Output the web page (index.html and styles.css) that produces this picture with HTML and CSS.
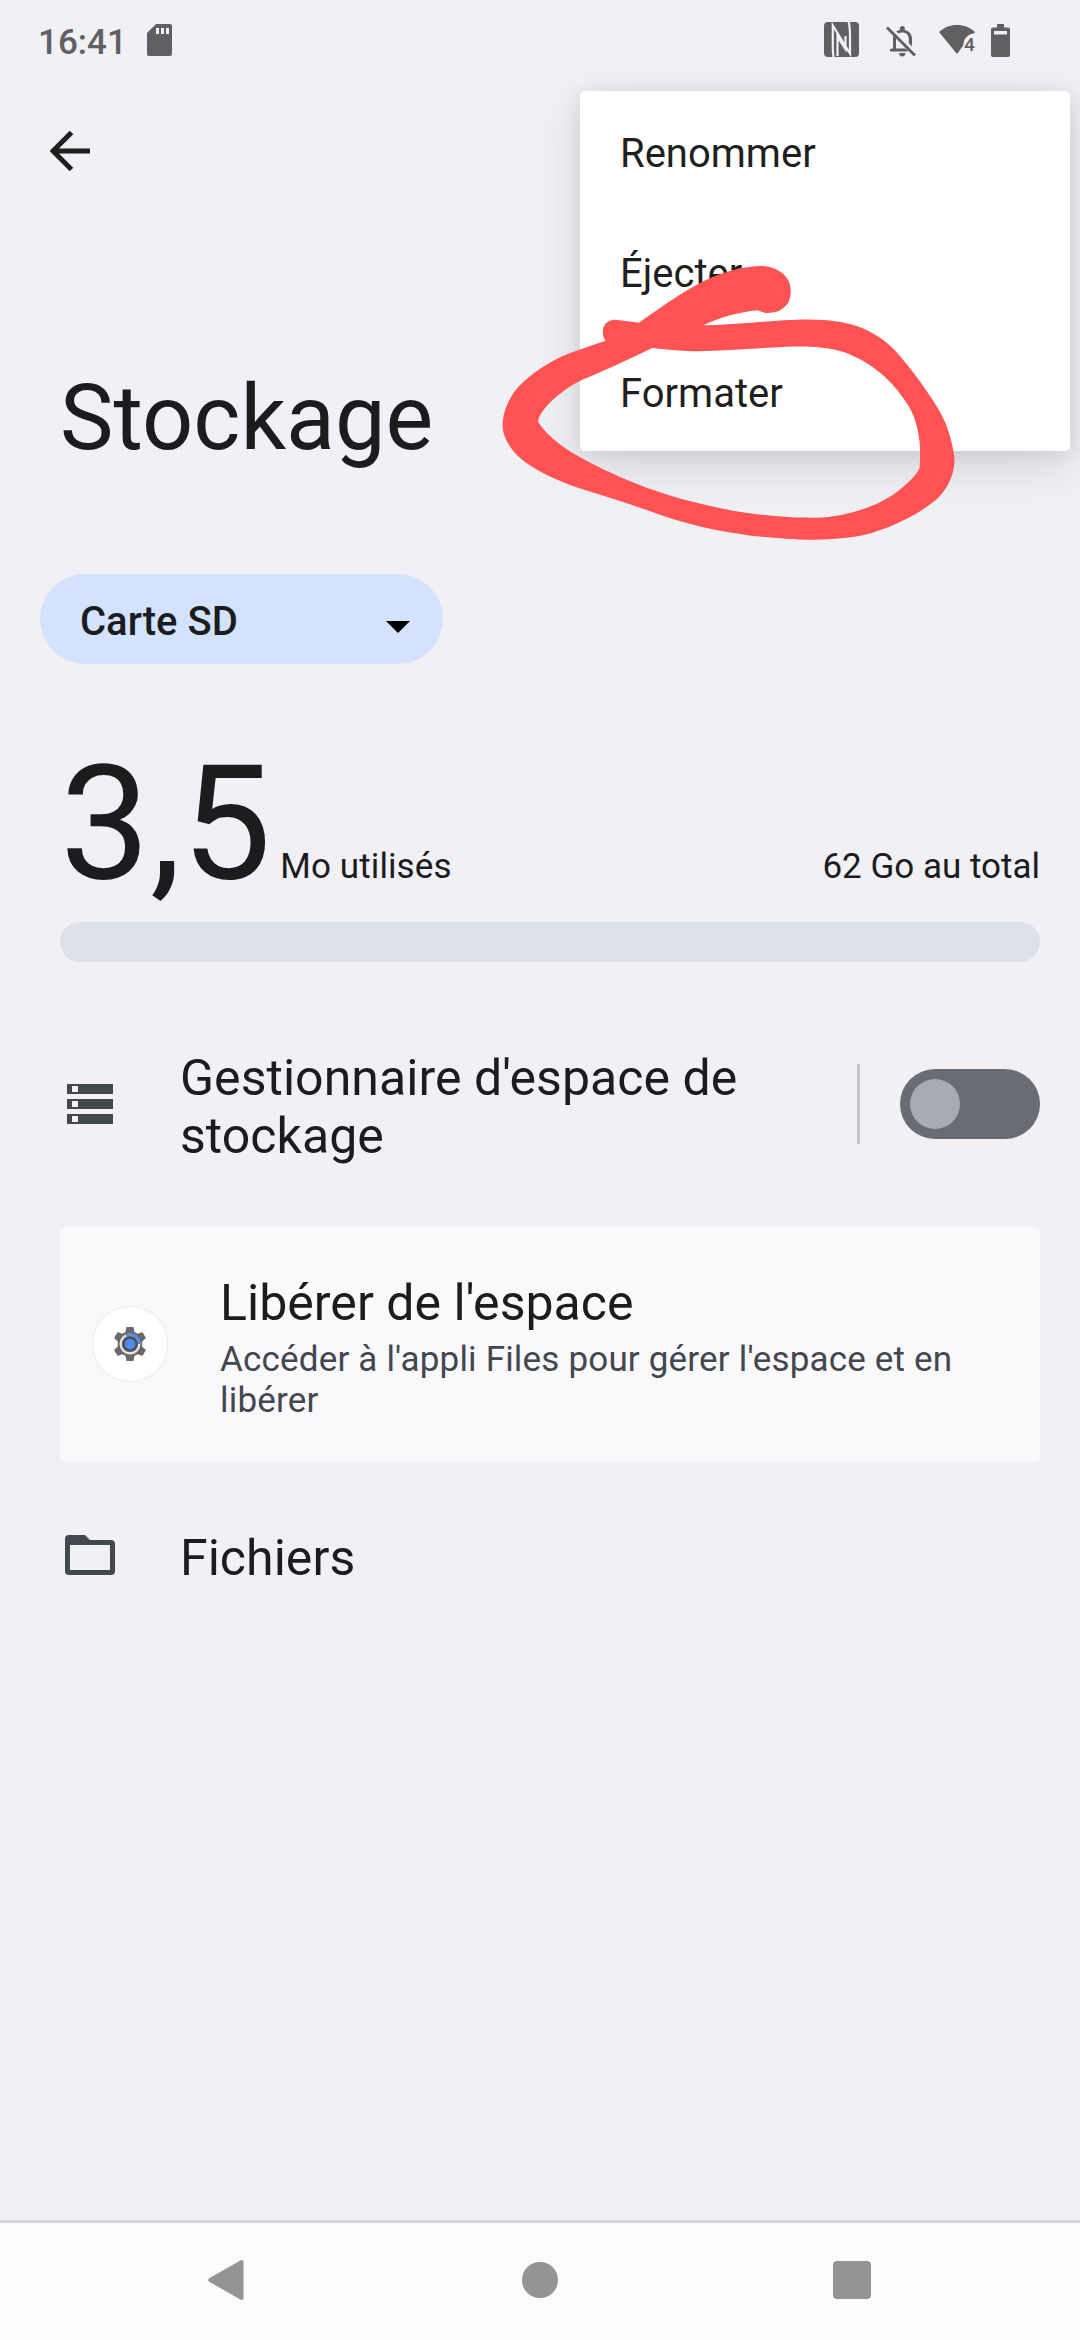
FILE: index.html
```html
<!DOCTYPE html>
<html lang="fr">
<head>
<meta charset="utf-8">
<title>Stockage</title>
<link rel="stylesheet" href="styles.css">
</head>
<body>
<div class="screen">
  <header class="status-bar">
    <span class="clock">16:41</span>
    <svg class="sd-icon" viewBox="0 0 25 32"><path d="M9 0h14a2 2 0 0 1 2 2v28a2 2 0 0 1-2 2H2a2 2 0 0 1-2-2V9z"/><path class="cut" d="M9 4h3v6H9zM14 4h3v6h-3zM19 4h3v6h-3z"/></svg>
    <div class="status-icons">
      <svg class="nfc-icon" viewBox="0 0 35 35"><rect width="35" height="35" rx="4"/><path class="nfc-line" d="M9.800 36C8.500 31 8.800 26 8.800 20V3.500L26 31.500V16C26 8 26 4 24.500-1M13.500 34V15L21.500 27V14"/></svg>
      <svg class="bell-icon" viewBox="0 0 30 31"><path d="M13.800 4V2.500a2.500 2.500 0 0 1 5 0V4c4.500 1 7.200 4.500 7.200 9v7.500l-3.200-3.200V13c0-3.800-2.500-6.500-6.500-6.500-1.500 0-2.800.4-3.800 1L10.200 5.300c1-.7 2.300-1.100 3.600-1.300zM7 9l3 3v10.500h9.500l3 3H4v-2.200l3-1zM13 27h6.500c0 2-1.400 3.500-3.200 3.500S13 29 13 27z"/><path class="slash" d="M1 1.500l28 28"/></svg>
      <svg class="wifi-icon" viewBox="0 0 36 29"><path d="M0 7C5 2.500 11 0 18 0s13 2.500 18 7l-.8 1.300C29 9.500 24.800 13 24.200 20.500L18 29z"/><text x="25" y="25.500">4</text></svg>
      <svg class="battery-icon" viewBox="0 0 19 33"><path d="M6 0h7v3.500h4a2 2 0 0 1 2 2V31a2 2 0 0 1-2 2H2a2 2 0 0 1-2-2V5.500a2 2 0 0 1 2-2h4z"/><path class="cut" d="M3 7h13v3.500H3z"/></svg>
    </div>
  </header>

  <div class="app-bar">
    <svg class="back-icon" viewBox="0 0 40 40"><path d="M21.500 1.500L3 20l18.500 18.500M3 20h37"/></svg>
  </div>

  <h1 class="page-title">Stockage</h1>

  <div class="volume-picker">
    <span class="volume-name">Carte SD</span>
    <svg class="caret" viewBox="0 0 24 12"><path d="M0 0h24L12 12z"/></svg>
  </div>

  <section class="usage">
    <div class="usage-text">
      <span class="used-value">3,5</span>
      <span class="used-unit">Mo utilisés</span>
      <span class="total">62 Go au total</span>
    </div>
    <div class="usage-bar"></div>
  </section>

  <div class="row manager-row">
    <svg class="storage-icon" viewBox="0 0 46 40"><path fill-rule="evenodd" d="M0 0h46v10H0zM5 2v6h6V2zM0 15h46v10H0zM5 17v6h6v-6zM0 30h46v10H0zM5 32v6h6v-6z"/></svg>
    <div class="row-title manager-title">Gestionnaire d'espace de stockage</div>
    <div class="divider"></div>
    <div class="switch"><div class="thumb"></div></div>
  </div>

  <div class="card">
    <div class="app-icon">
      <svg viewBox="-17 -17 34 34">
        <path class="gear" d="M-3.500-17h7l1 5 3.200 1.800 4.700-1.700 3.500 6-3.700 3.400v5l3.700 3.400-3.500 6-4.700-1.700-3.200 1.800-1 5h-7l-1-5-3.200-1.800-4.700 1.700-3.500-6 3.700-3.400v-5l-3.700-3.400 3.500-6 4.700 1.700 3.200-1.800z"/>
        <circle class="ring" r="9.300"/>
        <path class="ring-blue" d="M-4-8.400A9.300 9.300 0 0 1 9.300 0"/>
        <circle class="hub" r="5.300"/>
      </svg>
    </div>
    <div class="card-text">
      <div class="row-title">Libérer de l'espace</div>
      <div class="summary">Accéder à l'appli Files pour gérer l'espace et en libérer</div>
    </div>
  </div>

  <div class="row files-row">
    <svg class="folder-icon" viewBox="0 0 50 40"><path fill-rule="evenodd" d="M4 0h16l5 5h21a4 4 0 0 1 4 4v27a4 4 0 0 1-4 4H4a4 4 0 0 1-4-4V4a4 4 0 0 1 4-4zM5 10v25h40V10z"/></svg>
    <div class="row-title">Fichiers</div>
  </div>

  <nav class="nav-bar">
    <svg class="nav-back" viewBox="0 0 36 40"><path d="M32 .8C33.500-.6 35.500 0 35.500 2v36c0 2-2 2.600-3.500 1.200L1.200 21.800c-1.300-1.200-1.300-2.400 0-3.600z"/></svg>
    <div class="nav-home"></div>
    <div class="nav-recents"></div>
  </nav>

  <div class="menu">
    <div class="menu-item">Renommer</div>
    <div class="menu-item">Éjecter</div>
    <div class="menu-item">Formater</div>
  </div>

  <svg class="scribble" viewBox="0 0 1568 1500" preserveAspectRatio="none"><path fill-rule="evenodd" d="M328 812C315 790 318 749 355 749L415 758C470 715 545 650 610 620C660 598 700 588 735 588C785 590 812 625 812 660C812 685 806 700 800 706C785 725 770 729 750 729C740 728 735 725 726 721C680 725 620 745 583 766C650 764 760 752 830 749C900 746 960 754 1000 775C1050 800 1075 830 1090 848C1130 900 1195 1000 1215 1055C1230 1095 1240 1150 1240 1170C1240 1215 1220 1257 1200 1280C1150 1335 1050 1390 970 1402C900 1412 850 1409 800 1406C700 1400 580 1378 470 1334C400 1305 330 1280 260 1255C180 1224 110 1180 85 1140C65 1110 59 1085 59 1065C60 1020 80 970 110 940C150 895 205 860 250 843C280 832 305 820 328 812ZM450 834C400 862 340 895 270 928C220 955 160 1010 151 1055C180 1105 230 1145 300 1185C430 1260 530 1292 660 1322C780 1345 850 1343 880 1343C950 1342 1040 1310 1090 1265C1120 1240 1145 1210 1149 1192C1150 1170 1151 1130 1148 1110C1143 1060 1130 1020 1108 988C1070 920 1010 870 950 846C900 828 850 828 800 830C720 835 640 842 570 844C520 843 480 838 450 834Z"/></svg>
</div>
</body>
</html>
```
FILE: styles.css
```css
* { box-sizing: border-box; }
body { margin: 0; font-family: Roboto, "Noto Sans", sans-serif; color: #1b1c1e; }
svg { display: block; flex: none; }

.screen {
  position: relative;
  display: flex;
  flex-direction: column;
  width: 1080px;
  height: 2340px;
  background: #f0f0f5;
  overflow: hidden;
}

.status-bar { display: flex; align-items: flex-start; height: 91px; padding: 0 70px 0 38px; fill: #606062; }
.clock { width: 109px; margin-top: 22px; font-size: 35px; font-weight: 500; line-height: 42px; color: #606062; }
.sd-icon { width: 25px; height: 32px; margin-top: 24px; }
.cut { fill: #f0f0f5; }
.status-icons { display: flex; margin-left: auto; }
.nfc-icon { width: 35px; height: 35px; margin: 22px 27px 0 0; }
.nfc-line { fill: none; stroke: #f0f0f5; stroke-width: 2.2; }
.bell-icon { width: 30px; height: 31px; margin: 26px 23px 0 0; }
.slash { stroke: #606062; stroke-width: 3; }
.wifi-icon { width: 36px; height: 29px; margin: 25px 16px 0 0; overflow: visible; }
.wifi-icon text { font-size: 19px; font-weight: 500; }
.battery-icon { width: 19px; height: 33px; margin-top: 24px; }

.app-bar { display: flex; align-items: center; height: 120px; padding-left: 50px; }
.back-icon { width: 40px; height: 40px; fill: none; stroke: #1f1f20; stroke-width: 5; }

.page-title { margin: 155px 0 0 60px; font-size: 90px; font-weight: 400; line-height: 106px; }

.volume-picker {
  display: flex;
  align-items: center;
  justify-content: space-between;
  width: 403px;
  height: 90px;
  margin: 102px 0 0 40px;
  padding: 0 33px 0 40px;
  border-radius: 45px;
  background: #d3e3fe;
}
.volume-name { padding-top: 6px; font-size: 40px; font-weight: 500; line-height: 48px; }
.caret { width: 24px; height: 12px; margin-top: 16px; fill: #000; }

.usage { margin: 66px 40px 0 60px; }
.usage-text { display: flex; align-items: baseline; height: 192px; }
.used-value { font-size: 160px; line-height: 188px; }
.used-unit { margin-left: 9px; font-size: 35px; letter-spacing: .1px; }
.total { margin-left: auto; font-size: 35px; }
.usage-bar { height: 40px; border-radius: 20px; background: #dee1ea; }

.row { display: flex; align-items: center; fill: #43474e; }
.row-title { font-size: 50px; line-height: 58px; letter-spacing: .04px; }

.manager-row { height: 142px; margin-top: 71px; padding: 0 40px 0 67px; }
.storage-icon { width: 46px; height: 40px; }
.manager-title { flex: 1; margin-left: 67px; padding-top: 5px; }
.divider { width: 3px; height: 80px; margin-left: 20px; background: #c6c6ca; }
.switch { width: 140px; height: 70px; margin-left: 40px; padding: 10px; border-radius: 35px; background: #686c74; }
.thumb { width: 50px; height: 50px; border-radius: 50%; background: #a8abb4; }

.card {
  display: flex;
  align-items: center;
  height: 235px;
  margin: 52px 40px 0 60px;
  padding: 0 40px 0 33px;
  border-radius: 5px;
  background: #f9f9fc;
}
.app-icon {
  display: flex;
  align-items: center;
  justify-content: center;
  width: 74px;
  height: 74px;
  margin-bottom: 2px;
  border-radius: 50%;
  background: #fff;
  box-shadow: 0 0 3px rgba(0, 0, 0, .12);
}
.app-icon svg { width: 34px; height: 34px; }
.gear { fill: #68696a; }
.ring { fill: #4e5052; stroke: #e4e4e4; stroke-width: 2.400; }
.ring-blue { fill: none; stroke: #4b8bf5; stroke-width: 2.400; }
.hub { fill: #4b8bf5; }
.card-text { flex: 1; margin-left: 53px; padding-top: 6px; }
.summary { margin-top: 7px; font-size: 35px; line-height: 41px; letter-spacing: .18px; color: #43474e; }

.files-row { height: 140px; margin-top: 23px; padding-left: 65px; }
.folder-icon { width: 50px; height: 40px; }
.files-row .row-title { margin-left: 65px; padding-top: 6px; }

.nav-bar {
  display: flex;
  align-items: center;
  height: 120px;
  margin-top: auto;
  padding: 0 0 3px 208px;
  border-top: 3px solid #d4d5d6;
  background: #fbfbfb;
  fill: #949494;
}
.nav-back { width: 36px; height: 40px; }
.nav-home { width: 36px; height: 36px; margin-left: 278px; border-radius: 50%; background: #949494; }
.nav-recents { width: 38px; height: 38px; margin-left: 275px; border-radius: 4px; background: #949494; }

.menu {
  position: absolute;
  left: 580px;
  top: 91px;
  width: 490px;
  border-radius: 5px;
  background: #fff;
  box-shadow: 0 14px 50px rgba(0, 0, 0, .13), 0 2px 18px rgba(0, 0, 0, .08);
}
.menu-item { height: 120px; padding: 3px 0 0 40px; font-size: 40px; line-height: 120px; color: #1f1f20; }

.scribble { position: absolute; left: 480px; top: 70px; width: 600px; height: 500px; fill: #ff5252; }
```
